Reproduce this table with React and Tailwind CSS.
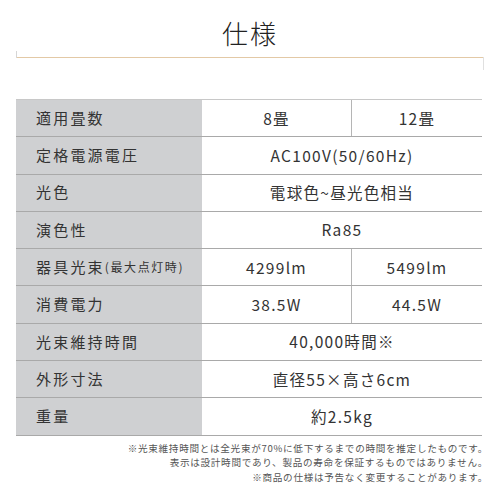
import React from 'react';

const font = { fontFamily: '"Noto Sans CJK JP", "Noto Sans", sans-serif' };

const rows = [
  { label: '適用畳数', values: ['8畳', '12畳'] },
  { label: '定格電源電圧', values: ['AC100V(50/60Hz)'] },
  { label: '光色', values: ['電球色~昼光色相当'] },
  { label: '演色性', values: ['Ra85'] },
  { label: '器具光束', sub: '(最大点灯時)', values: ['4299lm', '5499lm'] },
  { label: '消費電力', values: ['38.5W', '44.5W'] },
  { label: '光束維持時間', values: ['40,000時間※'] },
  { label: '外形寸法', values: ['直径55×高さ6cm'] },
  { label: '重量', values: ['約2.5kg'] },
];

export default function App() {
  return (
    <div className="w-[500px] h-[500px] bg-white text-[#333] overflow-hidden" style={font}>
      {/* ── Title ── */}
      <div className="pt-[14px] text-center text-[26px] leading-[38px] font-light tracking-[2px] text-[#222]">
        仕様
      </div>
      <div className="mx-[16px] mt-[-1px] flex h-[13px] w-[468px]">
        <div className="w-px h-[7px] bg-[#d6d6d6]" />
        <div className="flex-1 h-[7px] border-b border-[#e3c9a6]" />
        <div className="w-px h-[13px] mt-[6px] bg-[#e0e0e0]" />
      </div>

      {/* ── Spec table ── */}
      <div className="mx-[16px] mt-[35px] w-[466px] border-t border-[#c8c8c8]">
        {rows.map((r) => (
          <div key={r.label} className="flex h-[37.3px] border-b border-[#a9a9a9]">
            <div className="w-[186px] shrink-0 bg-[#cfd0d2] flex items-center pl-[20px] text-[15px] tracking-[2.2px] text-[#333]">
              {r.label}
              {r.sub && <span className="text-[12px] tracking-[1.6px]">{r.sub}</span>}
            </div>
            {r.values.length === 2 ? (
              <div className="flex-1 flex">
                <div className="w-[149px] flex items-center justify-center text-[15.5px] tracking-[1.3px] text-[#333]">
                  {r.values[0]}
                </div>
                <div className="flex-1 flex items-center justify-center border-l border-[#b5b5b5] text-[15.5px] tracking-[1.3px] text-[#333]">
                  {r.values[1]}
                </div>
              </div>
            ) : (
              <div className="flex-1 flex items-center justify-center text-[15.5px] tracking-[1.3px] text-[#333]">
                {r.values[0]}
              </div>
            )}
          </div>
        ))}
      </div>

      {/* ── Footnotes ── */}
      <div className="mt-[5px] pr-[12px] text-right text-[9.6px] leading-[14.5px] tracking-[0.7px] text-[#555]">
        <div>※光束維持時間とは全光束が70%に低下するまでの時間を推定したものです。</div>
        <div>表示は設計時間であり、製品の寿命を保証するものではありません。</div>
        <div>※商品の仕様は予告なく変更することがあります。</div>
      </div>
    </div>
  );
}
